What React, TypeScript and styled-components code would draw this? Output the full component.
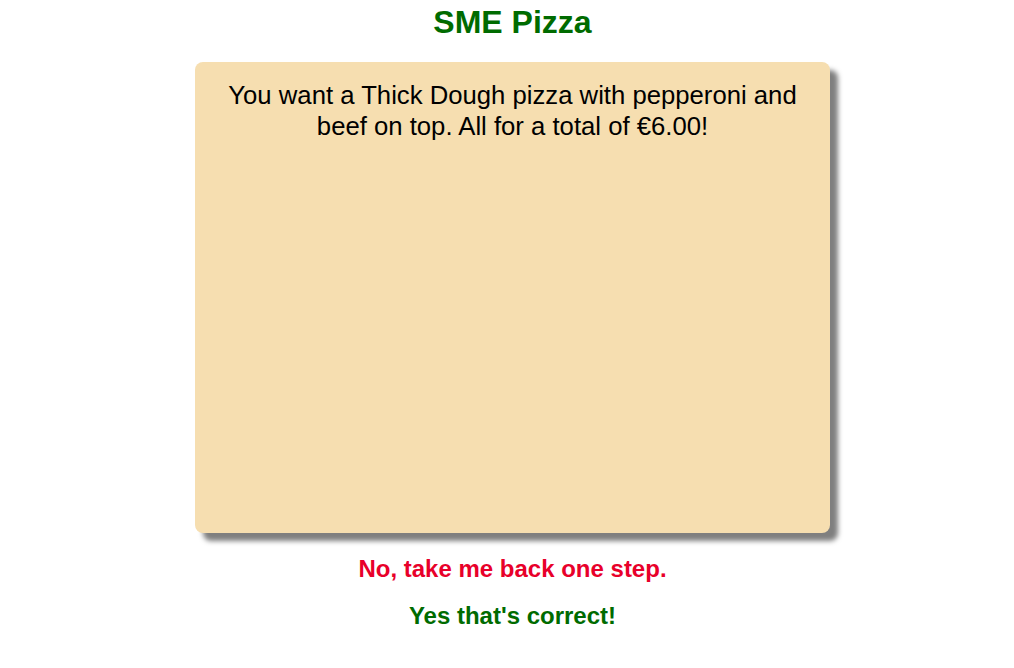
import React from "react";
import styled, { createGlobalStyle } from "styled-components";

const GlobalStyle = createGlobalStyle`
  html, body {
    margin: 0;
    padding: 0;
    background: #ffffff;
    font-family: "Liberation Sans", Arial, Helvetica, sans-serif;
  }
`;

const Page = styled.main`
  display: flex;
  flex-direction: column;
  align-items: center;
  padding: 4px 0 0 11px;
  box-sizing: border-box;
  width: 100%;
`;

const Title = styled.h1`
  margin: 0 0 21px;
  font-size: 32px;
  font-weight: bold;
  color: #006b00;
  line-height: normal;
`;

const Card = styled.section`
  box-sizing: border-box;
  width: 635px;
  height: 471px;
  background: #f6deb0;
  border-radius: 8px;
  box-shadow: 8px 8px 5px #7f7f7f;
  padding: 18px 20px;
  text-align: center;
`;

const Summary = styled.p`
  margin: 0;
  font-size: 25.7px;
  line-height: 31px;
  color: #000;
`;

const Actions = styled.div`
  display: flex;
  flex-direction: column;
  align-items: center;
  gap: 19px;
  margin-top: 22px;
`;

const ActionButton = styled.button<{ $tone: "back" | "confirm" }>`
  background: none;
  border: none;
  padding: 0;
  margin: 0;
  font-family: inherit;
  font-size: 24px;
  font-weight: bold;
  line-height: normal;
  cursor: pointer;
  color: ${(p) => (p.$tone === "back" ? "#e8002a" : "#006b00")};
`;

export default function App() {
  return (
    <>
      <GlobalStyle />
      <Page>
        <Title>SME Pizza</Title>
        <Card>
          <Summary>
            You want a Thick Dough pizza with pepperoni and beef on top. All for
            a total of €6.00!
          </Summary>
        </Card>
        <Actions>
          <ActionButton $tone="back">No, take me back one step.</ActionButton>
          <ActionButton $tone="confirm">Yes that's correct!</ActionButton>
        </Actions>
      </Page>
    </>
  );
}
